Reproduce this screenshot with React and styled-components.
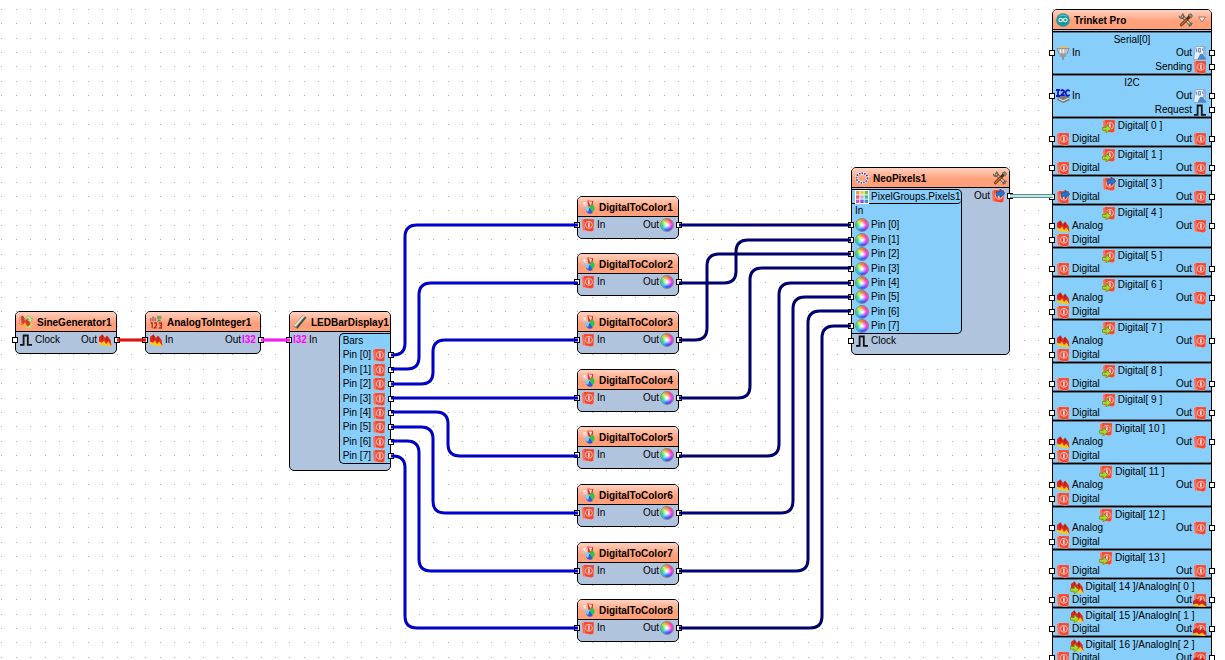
import React from "react"
import styled, { createGlobalStyle } from "styled-components"

const colors = {
  ink: "#000000",
  body: "#b0c4de",
  sky: "#87cefa",
  red: "#ec4a37",
  magenta: "#ff00ff",
}

const digitalInputs = Array.from({ length: 8 }, (_, i) => i)

const boardChannels = [
  { label: "Digital[ 0 ]", rows: [["Digital", "Out"]] },
  { label: "Digital[ 1 ]", rows: [["Digital", "Out"]] },
  { label: "Digital[ 3 ]", output: true, rows: [["Digital", "Out"]] },
  { label: "Digital[ 4 ]", rows: [["Analog", "Out"], ["Digital"]] },
  { label: "Digital[ 5 ]", rows: [["Digital", "Out"]] },
  { label: "Digital[ 6 ]", rows: [["Analog", "Out"], ["Digital"]] },
  { label: "Digital[ 7 ]", rows: [["Analog", "Out"], ["Digital"]] },
  { label: "Digital[ 8 ]", rows: [["Digital", "Out"]] },
  { label: "Digital[ 9 ]", rows: [["Digital", "Out"]] },
  { label: "Digital[ 10 ]", rows: [["Analog", "Out"], ["Digital"]] },
  { label: "Digital[ 11 ]", rows: [["Analog", "Out"], ["Digital"]] },
  { label: "Digital[ 12 ]", rows: [["Analog", "Out"], ["Digital"]] },
  { label: "Digital[ 13 ]", rows: [["Digital", "Out"]] },
  { label: "Digital[ 14 ]/AnalogIn[ 0 ]", analog: true, rows: [["Digital", "Out"]] },
  { label: "Digital[ 15 ]/AnalogIn[ 1 ]", analog: true, rows: [["Digital", "Out"]] },
  { label: "Digital[ 16 ]/AnalogIn[ 2 ]", analog: true, rows: [["Digital", "Out"]] },
]

const converterTops = [196, 253, 311, 369, 426, 484, 542, 599]

// [x1, y1, bend x, x2, y2]
const blueWires = [
  [391, 355, 405, 578, 225],
  [391, 369, 419, 578, 283],
  [391, 384, 433, 578, 340],
  [391, 398, 448, 578, 398],
  [391, 412, 448, 578, 456],
  [391, 427, 433, 578, 513],
  [391, 441, 419, 578, 571],
  [391, 456, 405, 578, 628],
]

const navyWires = [
  [679, 225, 736, 851, 225],
  [679, 283, 736, 851, 240],
  [679, 340, 707, 851, 254],
  [679, 398, 750, 851, 268],
  [679, 456, 779, 851, 283],
  [679, 513, 793, 851, 297],
  [679, 571, 808, 851, 311],
  [679, 628, 822, 851, 326],
]

function wirePath([x1, y1, bend, x2, y2]) {
  if (y1 === y2) return `M${x1} ${y1}H${x2}`
  const r = 12
  const s = y2 > y1 ? 1 : -1
  return `M${x1} ${y1}H${bend - r}Q${bend} ${y1} ${bend} ${y1 + s * r}V${
    y2 - s * r
  }Q${bend} ${y2} ${bend + r} ${y2}H${x2}`
}

/* ---------- icons ---------- */

const DigitalShape = () => (
  <>
    <path d="M.5 1.6 3.5.4 13.2 1v11.6L10.6 13.8 1.4 12.6z" fill="#f7b0a5" />
    <path d="M3 1 13 1.2 12.4 12.4 10.4 13.6 3.6 12.2z" fill={colors.red} />
    <path d="M1 2 3 1.2 3.6 12.2 1.8 12.4z" fill="#f0705f" />
    <circle cx="7.9" cy="6.8" r="3.5" fill="none" stroke="#fbc9c0" strokeWidth=".9" />
    <path d="M7.9 4.4v4.8" stroke="#fff" strokeWidth="1.3" />
  </>
)

const AnalogShape = () => (
  <>
    <path d="M1 4 4.5 1.2 7 5 9 2.4 12.6 7 13.4 13 8 11 1 10z" fill="#e0281e" />
    <path d="M1 8.5 4 9.8 6 7.6 8 11 10.5 8.6 13.4 13.2 8 13 1 11.4z" fill="#f9c822" />
    <path d="M4.3 2.4v4.4M9 3.8v4" stroke="#93140e" strokeWidth=".8" />
  </>
)

const GreenArrow = () => (
  <path
    d="M.4 8.4h3.8V5.6L9 9.8 4.2 14v-2.8H.4z"
    fill="#a8da2c"
    stroke="#5c8a12"
    strokeWidth=".7"
  />
)

const icons = {
  digital: <DigitalShape />,
  digitalIn: (
    <>
      <DigitalShape />
      <GreenArrow />
    </>
  ),
  digitalOut: (
    <>
      <DigitalShape />
      <path
        d="M5.5 6.8V2.8H9V0L14 4.2 9 8.4V5.8L7.2 6.8z"
        fill="#2277d2"
        stroke="#0d4792"
        strokeWidth=".6"
      />
    </>
  ),
  analog: <AnalogShape />,
  analogIn: (
    <>
      <AnalogShape />
      <GreenArrow />
    </>
  ),
  digitalAnalog: (
    <>
      <DigitalShape />
      <path d="M0 8 4 5.5 6.5 9 9 6.5 13.4 9.5V14L8 12.5 0 12z" fill="#cf231a" />
      <path d="M0 11.4 4 10.4 6 12.5 9 10.5 13.4 14 0 13z" fill="#f7c325" />
    </>
  ),
  clock: <path d="M1 11.8h3.6V2.5h4.2v9.3H13" fill="none" stroke="#111" strokeWidth="1.8" />,
  usb: (
    <>
      <path d="M2.5.4h9v2.4h-9z" fill="#e5b96a" />
      <path d="M.8 2.6h12.4L10.8 8H3.2z" fill="#c4c4c4" stroke="#7d7d7d" strokeWidth=".7" />
      <path d="M4.2 8h5.6v2.8H4.2z" fill="#9a9a9a" />
      <path d="M7 10.5V14" stroke="#8a8a8a" strokeWidth="1.6" />
      <path d="M4.6 3.2v4M7.4 3.2v4" stroke="#f3f3f3" />
    </>
  ),
  binary: (
    <>
      <path d="M2.4.5h10L12 13.5H.6z" fill="#e3effa" stroke="#7f9fc0" strokeWidth=".8" />
      <path d="M3.6 2.5v3.6M5.6 2.5h1.8v3.6H5.6zM9.5 2.5v2" fill="none" stroke="#5d6f88" strokeWidth=".8" />
      <path d="M4.4 13.6 7.2 8h2.6L13.6 13.6z" fill="#4f86ca" />
      <path d="M11 1v8" stroke="#8fb0dc" strokeWidth="1.8" />
    </>
  ),
  i2c: (
    <>
      <path d="M1.5 8 8 5.4l5.4 3.2v2.6L7.2 14l-5.7-2.8z" fill="#74787f" />
      <path d="M2.6 9.6 7 11.8 12.6 9.2" fill="none" stroke="#e6dfc4" strokeWidth="1.1" />
      <path
        d="M0 1h4M2 1v6M0 7h4M5 2.2C5.6.4 8.4.7 8 3L5.2 6.2h3.4M13.8 2.2C12 .2 9.6 1.2 9.7 4s2.4 3.6 4.1 1.8"
        fill="none"
        stroke="#1414c0"
        strokeWidth="1.8"
      />
    </>
  ),
  sine: (
    <>
      <path d="M0 2.2 4 .4l2.6 5L9 3l3.6 9L7 12 .6 9z" fill="#dd3a2e" />
      <path d="M0 2.2 2 1.2 2.6 9.4.6 9z" fill="#efa297" />
      <path d="M1 7l3 2.5L6 7l2.5 5L12 8.5l1 4.8L5 12z" fill="#f4b92d" />
      <path d="M5.6 5.5C6 .2 11.4-.4 12.2 3.6l1.6-.3-2.2 4.2L8.2 4.8l1.8-.4C9.5 2.6 7 3.2 5.6 5.5z" fill="#c9ec9c" stroke="#62a243" strokeWidth=".5" />
      <path d="M7.5 12c3.4 1 5.6-1.4 5-4.4" fill="none" stroke="#b5dc92" strokeWidth="1.6" />
    </>
  ),
  convert: (
    <>
      <path d="M.4.6h7v6.2h-7z" fill="#f0c2b6" />
      <path d="M1.8 6.4V3M4 6.4V1.4M6.2 6.4V2.6" stroke="#c5584a" strokeWidth="1.5" />
      <path d="M8 .8h4.4v3.4H8z" fill="#74a95e" />
      <path d="M9.6 4.2 12.4 6 8 6.4z" fill="#4f8b3b" />
      <path d="M3.2 7.4v5.8M1.8 8.4l1.4-1M5.2 8h2.2v2.4l-2 2.4h2.4M9.6 8h2.8v5H9.6M10.4 10.3h2" fill="none" stroke="#b32d20" strokeWidth="1.3" />
    </>
  ),
  ledBar: (
    <>
      <path d="M.2 11.2 9.4.2l4.4 2L4.6 14z" fill="#74776a" />
      <path d="M.8 10.8 9.8.4l2 .8L2.8 11.8z" fill="#dfe2d2" />
      <path d="M4 12.6 12.4 2.6" stroke="#3f4634" strokeWidth="1.2" />
    </>
  ),
  toColor: (
    <>
      <path d="M0 2.4 5.4.4 6.6 7.6 1.6 7.6z" fill="#f1b9ad" />
      <path d="M1.4 3 4.6 1.6 5.4 6.4z" fill="#fbe4dd" />
      <path d="M6.4.4 12 1v6H7.4z" fill="#ea2f22" />
      <path d="M7.4 1.2 11 1.8 9.8 5.8z" fill="#fde8e3" />
      <path d="M10.8 4c3.8 2 3.6 7 0 8.4L8.6 7.6z" fill="#2fc445" />
      <path d="M4.6 9 9 8l2.8 5c-3 1.8-6.8.6-7.2-4z" fill="#2f58dc" />
      <path d="M3.8 6.8 8.6 6.6 7.2 12C5 11.2 3.6 9 3.8 6.8z" fill="#7fd0f2" />
    </>
  ),
  ring: (
    <>
      <ellipse cx="7" cy="7" rx="5.6" ry="4.8" fill="none" stroke="#fff" strokeWidth="2.8" />
      <ellipse
        cx="7"
        cy="7"
        rx="5.6"
        ry="4.8"
        fill="none"
        stroke="#5a3f86"
        strokeWidth="1.8"
        strokeDasharray="1.6 1"
      />
    </>
  ),
  arduino: (
    <>
      <circle cx="7" cy="7" r="6.8" fill="#1d979c" />
      <path d="M3 3.6C5 1.6 9 1.6 11 3.6" fill="none" stroke="#7ccbcd" strokeWidth="1" />
      <circle cx="4.7" cy="7" r="1.8" fill="none" stroke="#e9fbfb" strokeWidth="1.1" />
      <circle cx="9.3" cy="7" r="1.8" fill="none" stroke="#e9fbfb" strokeWidth="1.1" />
    </>
  ),
  pixels: (
    <>
      <path d="M0 0h14v14H0z" fill="#fff" />
      <path d="M1 1h3.4v3.4H1z" fill="#e0a03e" />
      <path d="M5.3 1h3.4v3.4H5.3z" fill="#e8cc55" />
      <path d="M9.6 1H13v3.4H9.6z" fill="#79c142" />
      <path d="M1 5.3h3.4v3.4H1z" fill="#ee5a77" />
      <path d="M5.3 5.3h3.4v3.4H5.3z" fill="#b7b7d8" />
      <path d="M9.6 5.3H13v3.4H9.6z" fill="#45b9a2" />
      <path d="M1 9.6h3.4V13H1z" fill="#d84fc4" />
      <path d="M5.3 9.6h3.4V13H5.3z" fill="#8556d8" />
      <path d="M9.6 9.6H13V13H9.6z" fill="#4b86e0" />
    </>
  ),
  tools: (
    <>
      <path d="M3.4 3.4 11.4 11.4" stroke="#5d4a3a" strokeWidth="3" strokeLinecap="round" />
      <path d="M3.4 3.4 11.4 11.4" stroke="#cfcac2" strokeWidth="1.5" strokeLinecap="round" />
      <path d="M.4 2.8c.2 2 1.6 3 3.4 2.4C5.4 4.6 5 1.6 3 .6" fill="none" stroke="#6d5f52" strokeWidth="1.4" />
      <path d="M11 3.2 2.4 11.8" stroke="#5a2d14" strokeWidth="3" strokeLinecap="round" />
      <path d="M7.4 6.8 2.4 11.8" stroke="#c76a2c" strokeWidth="1.6" strokeLinecap="round" />
      <path d="M9 2 12 .6 13.6 3 11.8 5.2z" fill="#8b8b86" stroke="#4d4943" strokeWidth=".6" />
      <path d="M10.4 13.6c-.4-2 .8-3.4 3.2-3.2" fill="none" stroke="#6d5f52" strokeWidth="1.4" />
    </>
  ),
  chevron: <path d="M3.5 4h7L7 9z" fill="#f4e4dd" stroke="#8d7468" strokeWidth=".9" />,
}

const Icon = ({ name }) => {
  if (name === "color") return <ColorWheel />
  if (name === "i32") return <TypeTag>I32</TypeTag>
  return (
    <IconSvg viewBox="0 0 14 14" aria-hidden="true">
      {icons[name]}
    </IconSvg>
  )
}

/* ---------- node parts ---------- */

const Pin = ({ icon, right, children }) => (
  <PinWrap $right={right}>
    <Port $right={right} />
    <Icon name={icon} />
    <span>{children}</span>
  </PinWrap>
)

const Title = ({ icon, tools, menu, children }) => (
  <TitleBar>
    <Icon name={icon} />
    <h2>{children}</h2>
    {tools && (
      <button type="button" aria-label="Settings">
        <Icon name="tools" />
      </button>
    )}
    {menu && (
      <button type="button" aria-label="Menu">
        <Icon name="chevron" />
      </button>
    )}
  </TitleBar>
)

const Converter = ({ index }) => (
  <Node $x={577} $y={converterTops[index]} $w={102}>
    <Title icon="toColor">DigitalToColor{index + 1}</Title>
    <NodeBody>
      <PinRow>
        <Pin icon="digital">In</Pin>
        <Pin icon="color" right>
          Out
        </Pin>
      </PinRow>
    </NodeBody>
  </Node>
)

const Channel = ({ label, rows, output, analog }) => (
  <Section>
    <SectionLabel>
      <Icon name={output ? "digitalOut" : analog ? "analogIn" : "digitalIn"} />
      {label}
    </SectionLabel>
    {rows.map(([left, right]) => (
      <PinRow key={left}>
        <Pin icon={left === "Analog" ? "analog" : output ? "digitalOut" : "digital"}>{left}</Pin>
        {right && (
          <Pin icon={analog ? "digitalAnalog" : "digital"} right>
            {right}
          </Pin>
        )}
      </PinRow>
    ))}
  </Section>
)

const Board = () => (
  <Node $x={1052} $y={9} $w={160}>
    <Title icon="arduino" tools menu>
      Trinket Pro
    </Title>
    <Sections>
      <Section>
        <SectionLabel>Serial[0]</SectionLabel>
        <PinRow>
          <Pin icon="usb">In</Pin>
          <Pin icon="binary" right>
            Out
          </Pin>
        </PinRow>
        <PinRow>
          <Pin icon="digital" right>
            Sending
          </Pin>
        </PinRow>
      </Section>
      <Section>
        <SectionLabel>I2C</SectionLabel>
        <PinRow>
          <Pin icon="i2c">In</Pin>
          <Pin icon="binary" right>
            Out
          </Pin>
        </PinRow>
        <PinRow>
          <Pin icon="clock" right>
            Request
          </Pin>
        </PinRow>
      </Section>
      {boardChannels.map((channel) => (
        <Channel key={channel.label} {...channel} />
      ))}
    </Sections>
  </Node>
)

const Wires = () => (
  <WireLayer aria-hidden="true">
    <path d="M117 340H146" stroke="#a80000" strokeWidth="3" />
    <path d="M117 340H146" stroke="#ff1010" strokeWidth="1.6" />
    <path d="M261 340H290" stroke="#d800d8" strokeWidth="3" />
    <path d="M261 340H290" stroke="#ff20ff" strokeWidth="1.6" />
    {blueWires.map((wire) => (
      <g key={wire[1]}>
        <path d={wirePath(wire)} stroke="#000090" strokeWidth="3" />
        <path d={wirePath(wire)} stroke="#0000f0" strokeWidth="1.4" />
      </g>
    ))}
    {navyWires.map((wire) => (
      <g key={wire[1]}>
        <path d={wirePath(wire)} stroke="#000040" strokeWidth="3" />
        <path d={wirePath(wire)} stroke="#000090" strokeWidth="1.4" />
      </g>
    ))}
    <path d="M1010 196H1053" stroke="#6a8a8a" strokeWidth="4" />
    <path d="M1010 196H1053" stroke="#b4ecec" strokeWidth="2" />
  </WireLayer>
)

export default function App() {
  return (
    <>
      <GlobalStyle />
      <Canvas>
        <Grid aria-hidden="true">
          <defs>
            <pattern id="dots" width="72" height="72" patternUnits="userSpaceOnUse">
              {[1, 16, 30, 45, 59].map((x) =>
                [9, 23, 38, 52, 66].map((y) => (
                  <rect key={`${x}-${y}`} x={x} y={y} width="1" height="1" fill="#a8a8a8" />
                ))
              )}
            </pattern>
          </defs>
          <rect width="100%" height="100%" fill="url(#dots)" />
        </Grid>

        <Node $x={15} $y={311} $w={102}>
          <Title icon="sine">SineGenerator1</Title>
          <NodeBody>
            <PinRow>
              <Pin icon="clock">Clock</Pin>
              <Pin icon="analog" right>
                Out
              </Pin>
            </PinRow>
          </NodeBody>
        </Node>

        <Node $x={145} $y={311} $w={116}>
          <Title icon="convert">AnalogToInteger1</Title>
          <NodeBody>
            <PinRow>
              <Pin icon="analog">In</Pin>
              <Pin icon="i32" right>
                Out
              </Pin>
            </PinRow>
          </NodeBody>
        </Node>

        <Node $x={289} $y={311} $w={102}>
          <Title icon="ledBar">LEDBarDisplay1</Title>
          <NodeBody>
            <Columns>
              <PinRow>
                <Pin icon="i32">In</Pin>
              </PinRow>
              <PinGroup $right>
                <GroupLabel>Bars</GroupLabel>
                <PinList>
                  {digitalInputs.map((i) => (
                    <PinRow as="li" key={i}>
                      <Pin icon="digital" right>
                        Pin [{i}]
                      </Pin>
                    </PinRow>
                  ))}
                </PinList>
              </PinGroup>
            </Columns>
          </NodeBody>
        </Node>

        {digitalInputs.map((i) => (
          <Converter key={i} index={i} />
        ))}

        <Node $x={851} $y={167} $w={159}>
          <Title icon="ring" tools>
            NeoPixels1
          </Title>
          <NodeBody>
            <Columns>
              <PinGroup>
                <GroupTitle>
                  <Icon name="pixels" />
                  PixelGroups.Pixels1
                </GroupTitle>
                <GroupLabel>In</GroupLabel>
                <PinList>
                  {digitalInputs.map((i) => (
                    <PinRow as="li" key={i}>
                      <Pin icon="color">Pin [{i}]</Pin>
                    </PinRow>
                  ))}
                </PinList>
              </PinGroup>
              <PinRow>
                <Pin icon="digitalOut" right>
                  Out
                </Pin>
              </PinRow>
            </Columns>
            <PinRow>
              <Pin icon="clock">Clock</Pin>
            </PinRow>
          </NodeBody>
        </Node>

        <Board />
        <Wires />
      </Canvas>
    </>
  )
}

const GlobalStyle = createGlobalStyle`
  * {
    box-sizing: border-box;
  }

  body {
    margin: 0;
    background: #fff;
    color: ${colors.ink};
    font-family: "Liberation Sans", Arial, sans-serif;
    font-size: 10px;
    line-height: 14px;
  }
`

const Canvas = styled.main`
  position: relative;
  height: 100vh;
  overflow: hidden;
`

const Grid = styled.svg`
  position: absolute;
  inset: 0;
  width: 100%;
  height: 100%;
`

const WireLayer = styled.svg`
  position: absolute;
  inset: 0;
  width: 100%;
  height: 100%;
  fill: none;
  pointer-events: none;
`

const Node = styled.section`
  position: absolute;
  left: ${({ $x }) => $x}px;
  top: ${({ $y }) => $y}px;
  width: ${({ $w }) => $w}px;
  border: 1px solid ${colors.ink};
  border-radius: 5px;
  background: ${colors.body};
  white-space: nowrap;
`

const TitleBar = styled.header`
  display: flex;
  align-items: center;
  gap: 2px;
  height: 20px;
  padding: 0 2px 0 3px;
  border-bottom: 1px solid ${colors.ink};
  border-radius: 4px 4px 0 0;
  background: linear-gradient(#ffd2c0, #ffa07a 60%, #ffa07a);

  h2 {
    flex: 1;
    margin: 0;
    padding: 2px 0 0 2px;
    font-size: 10px;
    font-weight: 700;
  }

  button {
    display: flex;
    padding: 0;
    border: 0;
    background: none;
  }
`

const NodeBody = styled.div`
  padding: 1px 0 6px;
`

const Columns = styled.div`
  display: flex;
  justify-content: space-between;
  align-items: flex-start;
`

const PinRow = styled.div`
  display: flex;
  align-items: center;
  height: 14px;
`

const PinWrap = styled.div`
  position: relative;
  display: flex;
  flex-direction: ${({ $right }) => ($right ? "row-reverse" : "row")};
  align-items: center;
  gap: ${({ $right }) => ($right ? 1 : 2)}px;
  margin-left: ${({ $right }) => ($right ? "auto" : 0)};
  padding: ${({ $right }) => ($right ? "0 4px 0 3px" : "0 0 0 3px")};
`

const Port = styled.i`
  position: absolute;
  top: 4px;
  ${({ $right }) => ($right ? "right" : "left")}: -4px;
  width: 6px;
  height: 6px;
  border: 1px solid ${colors.ink};
  background: #fff;
`

const IconSvg = styled.svg`
  flex: none;
  width: 14px;
  height: 14px;
`

const ColorWheel = styled.i`
  flex: none;
  width: 14px;
  height: 14px;
  border: 1px solid #7f8590;
  border-radius: 50%;
  background:
    radial-gradient(circle, #fff 8%, transparent 55%),
    conic-gradient(#ff7a3a, #ff3f8a, #ff3ff0, #8a3cff, #2f5bff, #22c8f0, #2fe05a, #b8ee3a, #ff7a3a);
`

const TypeTag = styled.b`
  flex: none;
  width: 14px;
  color: ${colors.magenta};
`

const PinGroup = styled.div`
  border: 1px solid ${colors.ink};
  border-width: ${({ $right }) => ($right ? "1px 0 1px 1px" : "1px 1px 1px 0")};
  border-radius: ${({ $right }) => ($right ? "5px 0 0 5px" : "0 5px 5px 0")};
  background: ${colors.sky};
`

const PinList = styled.ul`
  margin: 0;
  padding: 0;
  list-style: none;

  li:nth-child(5n + 2),
  li:nth-child(5n + 4) {
    height: 15px;
  }
`

const GroupTitle = styled.div`
  display: flex;
  align-items: center;
  gap: 2px;
  height: 14px;
  padding: 0 1px 0 3px;
  border-bottom: 1px solid ${colors.ink};
  border-radius: 0 4px 4px 0;
`

const GroupLabel = styled.div`
  height: 14px;
  padding-left: 3px;
`

const Sections = styled.div`
  margin-top: 1px;
  border-top: 1px solid ${colors.ink};
  background: ${colors.sky};
`

const Section = styled.section`
  border-bottom: 1px solid ${colors.ink};
  box-shadow:
    inset 0 1px #5b7184,
    inset 0 -1px #5b7184;
`

const SectionLabel = styled.h3`
  display: flex;
  justify-content: center;
  align-items: center;
  gap: 2px;
  height: 14px;
  margin: 0;
  padding-top: 1px;
  font-size: 10px;
  font-weight: 400;
`
